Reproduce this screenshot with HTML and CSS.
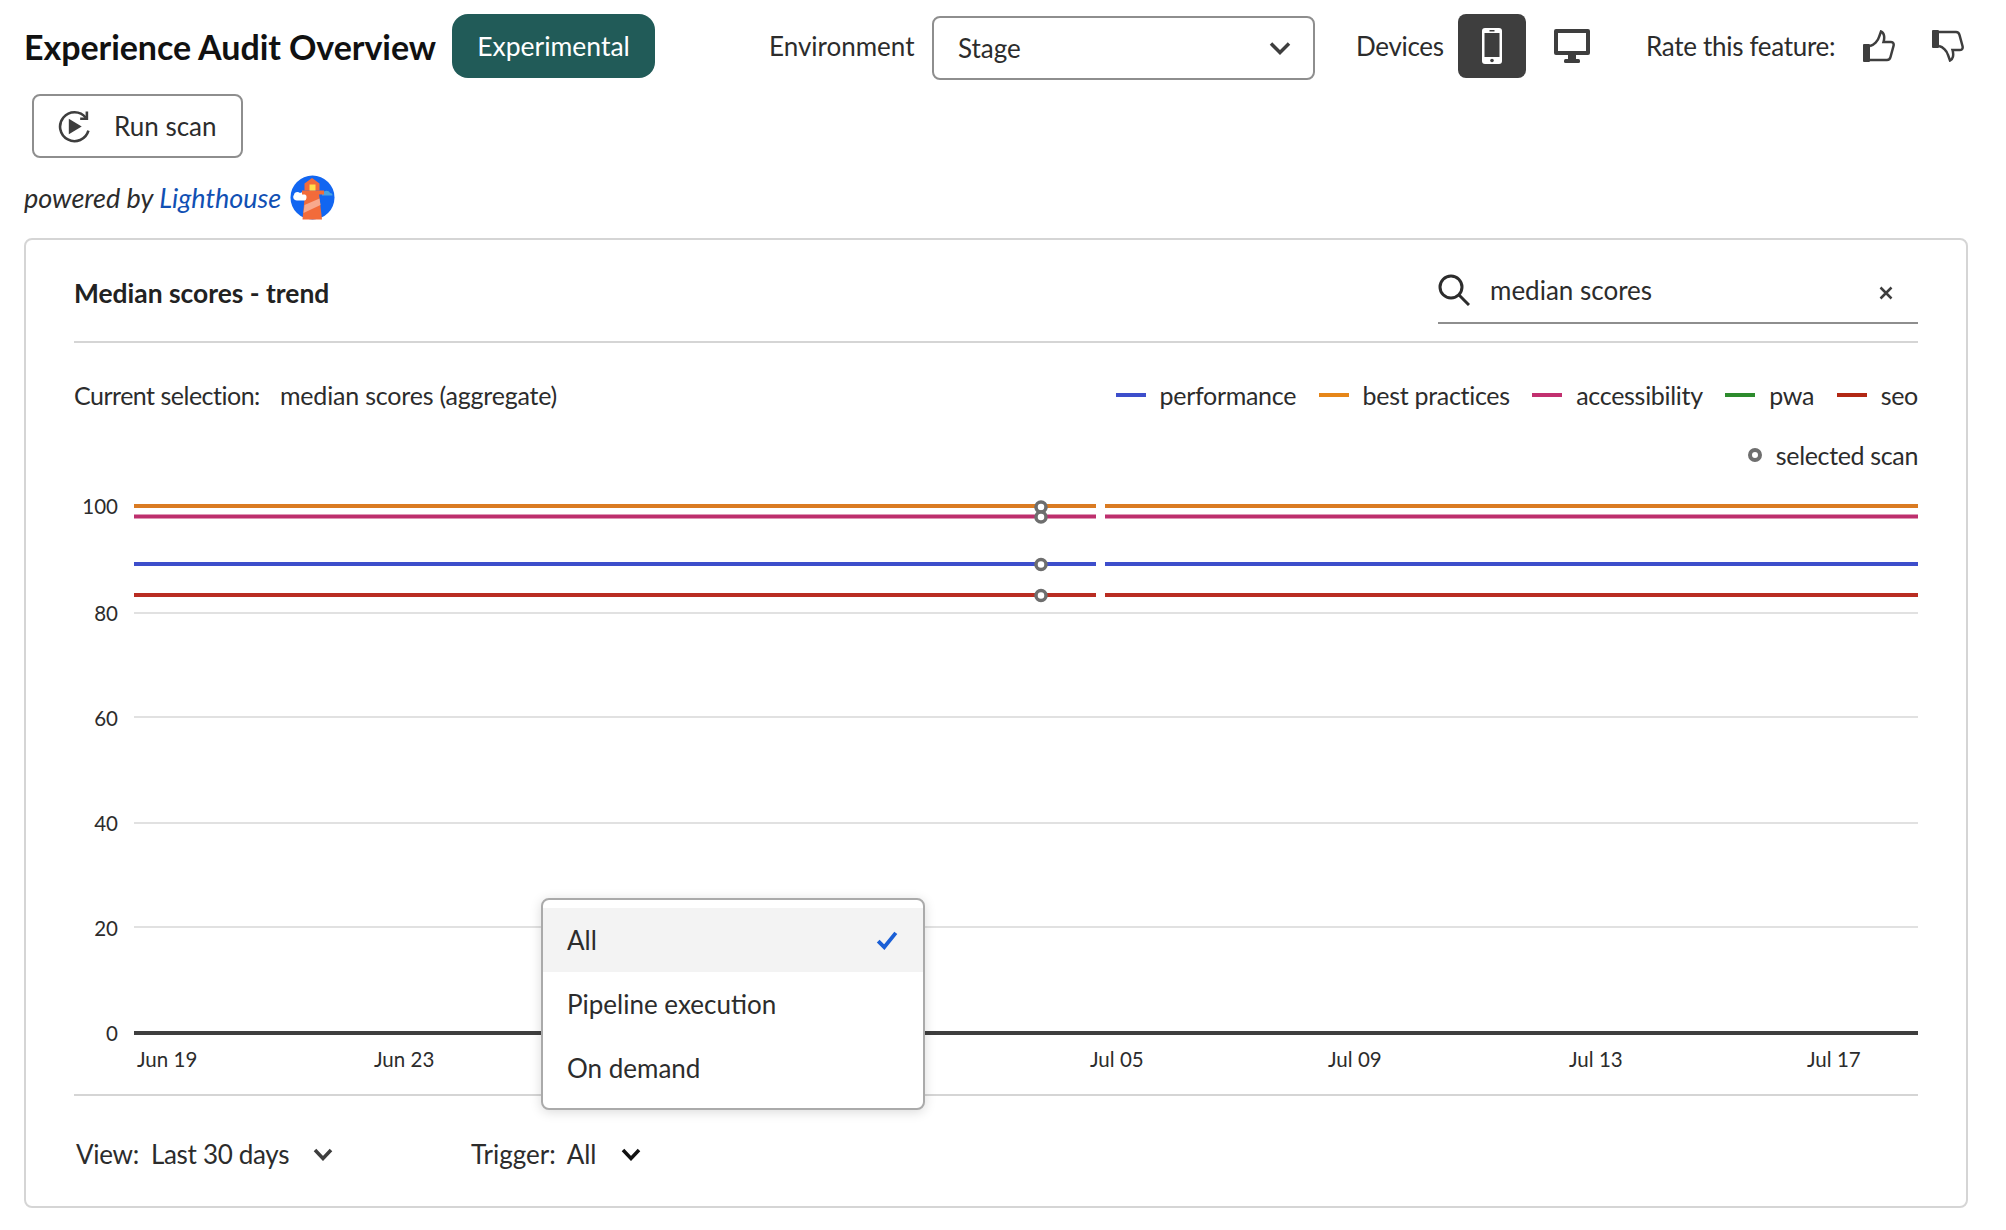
FILE: index.html
```html
<!DOCTYPE html>
<html lang="en">
<head>
    <meta charset="UTF-8">
    <title>Experience Audit Overview</title>
    <link rel="stylesheet" href="styles.css">
</head>
<body>
    <div class="top-bar">
        <h1 class="page-title">Experience Audit Overview</h1>
        <span class="badge">Experimental</span>
        <span class="env-label">Environment</span>
        <div class="select">
            <span>Stage</span>
            <svg class="chevron" width="22" height="14" viewBox="0 0 22 14"><path d="M2 2.500 L11 11.500 L20 2.500" /></svg>
        </div>
        <span class="devices-label">Devices</span>
        <div class="device-btn active">
            <svg width="20" height="36" viewBox="0 0 20 36">
                <rect width="20" height="36" rx="3" fill="#fff" />
                <rect x="2.500" y="5" width="15" height="24" fill="#3e3e3e" />
                <circle cx="10" cy="32.500" r="1.800" fill="#3e3e3e" />
                <rect x="7.500" y="2" width="5" height="1.500" fill="#3e3e3e" />
            </svg>
        </div>
        <div class="device-btn">
            <svg width="36" height="34" viewBox="0 0 36 34">
                <path fill="#3e3e3e" fill-rule="evenodd" d="M2 0 H34 A2 2 0 0 1 36 2 V24 A2 2 0 0 1 34 26 H2 A2 2 0 0 1 0 24 V2 A2 2 0 0 1 2 0 Z M4 4 V22 H32 V4 Z" />
                <rect x="14" y="26" width="8" height="5" fill="#3e3e3e" />
                <rect x="10" y="30" width="16" height="4" rx="1.500" fill="#3e3e3e" />
            </svg>
        </div>
        <span class="rate-label">Rate this feature:</span>
        <svg class="thumb-up" width="32" height="32" viewBox="0 0 32 32">
            <rect x="0" y="14" width="7" height="18" rx="1" fill="#3e3e3e" />
            <path class="thumb-line" d="M7 16 C11 15 15 11 16 7 L18 1.500 C21 2.500 22 7 20.500 12 L28 12 C30.500 12 31 14 30.500 16 L27.500 27 C27 29 26 30 24 30 L7 30" />
        </svg>
        <svg class="thumb-down" width="32" height="32" viewBox="0 0 32 32">
            <rect x="0" y="0" width="7" height="18" rx="1" fill="#3e3e3e" />
            <path class="thumb-line" d="M7 2 L24 2 C26 2 27 3 27.500 5 L30.500 16 C31 18 30.500 20 28 20 L20.500 20 C22 25 21 29.500 18 30.500 L16 25 C15 21 11 17 7 16" />
        </svg>
    </div>

    <button class="run-btn">
        <svg width="33" height="33" viewBox="0 0 32 32">
            <path class="run-ring" d="M29.500 20 A14 14 0 1 1 27 7.500" />
            <path class="run-ring" d="M28 1.500 V8.500 H21.500" />
            <path d="M10.500 8.500 L23 16 L10.500 23.500 Z" fill="#3e3e3e" />
        </svg>
        <span>Run scan</span>
    </button>

    <div class="powered">
        <span>powered by <a class="powered-link">Lighthouse</a></span>
        <svg width="45" height="45" viewBox="0 0 45 45">
            <circle cx="22.500" cy="22.500" r="22" fill="#1266f1" />
            <path d="M33 18 C34 15 39 15 40 18 C42 18 42.500 19 42.500 20.500 H32 C32 19 32 18 33 18 Z" fill="#4aa3df" />
            <path d="M15 19 L29 19 L32 44.500 L12.500 44.500 Z" fill="#f26b3a" />
            <path d="M14.500 30 L29.500 23.500 L30.500 30 L13.500 38 Z" fill="#f8a98d" />
            <path d="M4 20 C4 17 8 16 10 18 C12 16.500 15 17 15.500 20 C17 20 17 25.500 14.500 25.500 H7 C3 25.500 2.500 21 4 20 Z" fill="#fff" />
            <rect x="12" y="15.500" width="22" height="4" fill="#f26b3a" />
            <path d="M14.500 15.500 V8.500 L22 3 L29.500 8.500 V15.500 Z" fill="#f26b3a" />
            <rect x="19.500" y="9.500" width="6" height="6" fill="#ffe04b" />
        </svg>
    </div>

    <section class="card">
        <div class="card-head">
            <h2 class="card-title">Median scores - trend</h2>
            <div class="search">
                <svg width="32" height="32" viewBox="0 0 32 32"><circle cx="13" cy="13" r="11" /><path d="M21 21 L31 31" /></svg>
                <span class="search-text">median scores</span>
                <svg class="search-clear" width="14" height="14" viewBox="0 0 14 14"><path d="M1.500 1.500 L12.500 12.500 M12.500 1.500 L1.500 12.500" /></svg>
            </div>
        </div>

        <div class="legend-row">
            <div class="selection">
                <span class="selection-label">Current selection:</span>
                <span class="selection-value">median scores (aggregate)</span>
            </div>
            <div class="legend">
                <span class="legend-item"><i class="swatch performance"></i>performance</span>
                <span class="legend-item"><i class="swatch practices"></i>best practices</span>
                <span class="legend-item"><i class="swatch accessibility"></i>accessibility</span>
                <span class="legend-item"><i class="swatch pwa"></i>pwa</span>
                <span class="legend-item"><i class="swatch seo"></i>seo</span>
            </div>
        </div>
        <div class="legend-scan"><i class="scan-dot"></i>selected scan</div>

        <svg class="chart" width="1844" height="614" viewBox="0 0 1844 614">
            <g class="grid">
                <line x1="60" x2="1844" y1="133" y2="133" />
                <line x1="60" x2="1844" y1="237" y2="237" />
                <line x1="60" x2="1844" y1="343" y2="343" />
                <line x1="60" x2="1844" y1="447" y2="447" />
            </g>
            <line class="axis" x1="60" x2="1844" y1="553" y2="553" />
            <g class="y-labels">
                <text x="44" y="34">100</text>
                <text x="44" y="141">80</text>
                <text x="44" y="246">60</text>
                <text x="44" y="351">40</text>
                <text x="44" y="456">20</text>
                <text x="44" y="561">0</text>
            </g>
            <path class="trend" stroke="#3d4ecb" d="M60 84 H1022 M1031 84 H1844" />
            <path class="trend" stroke="#bd2f6d" d="M60 36.500 H1022 M1031 36.500 H1844" />
            <path class="trend" stroke="#b92d22" d="M60 115 H1022 M1031 115 H1844" />
            <path class="trend" stroke="#da7b22" d="M60 26 H1022 M1031 26 H1844" />
            <g class="scan-marks">
                <circle cx="967" cy="27" r="5" />
                <circle cx="967" cy="37" r="5" />
                <circle cx="967" cy="84.500" r="5" />
                <circle cx="967" cy="115.500" r="5" />
            </g>
            <g class="x-labels">
                <text x="63" y="587">Jun 19</text>
                <text x="300" y="587">Jun 23</text>
                <text x="1016" y="587">Jul 05</text>
                <text x="1254" y="587">Jul 09</text>
                <text x="1495" y="587">Jul 13</text>
                <text x="1733" y="587">Jul 17</text>
            </g>
        </svg>

        <div class="card-foot">
            <div class="picker view-picker">
                <span class="picker-label">View:</span>
                <span class="picker-value">Last 30 days</span>
                <svg class="chevron" width="20" height="13" viewBox="0 0 20 13"><path d="M2 2 L10 10.500 L18 2" /></svg>
            </div>
            <div class="picker trigger-picker">
                <span class="picker-label">Trigger:</span>
                <span class="picker-value">All</span>
                <svg class="chevron black" width="20" height="13" viewBox="0 0 20 13"><path d="M2 2 L10 10.500 L18 2" /></svg>
            </div>
        </div>

        <ul class="menu">
            <li class="menu-item selected">
                All
                <svg width="22" height="20" viewBox="0 0 20 18"><path d="M2 10 L7.500 15.500 L18 2.500" /></svg>
            </li>
            <li class="menu-item">Pipeline execution</li>
            <li class="menu-item">On demand</li>
        </ul>
    </section>
</body>
</html>
```
FILE: styles.css
```css
* {
    box-sizing: border-box;
}

body {
    margin: 0;
    background: #fff;
    color: #2c2c2c;
    font-family: Lato, "Open Sans", sans-serif;
    font-size: 26px;
}

.top-bar {
    display: flex;
    align-items: center;
    height: 64px;
    margin: 14px 0 0 24px;
}

.page-title {
    margin: 0;
    width: 412px;
    font-size: 34px;
    font-weight: 700;
    letter-spacing: -0.06px;
    color: #111;
    white-space: nowrap;
}

.badge {
    display: flex;
    align-items: center;
    justify-content: center;
    width: 203px;
    height: 64px;
    margin-left: 16px;
    background: #215b58;
    color: #fff;
    font-size: 26.500px;
    border-radius: 16px;
}

.env-label {
    margin-left: 114px;
    width: 147px;
    white-space: nowrap;
}

.select {
    display: flex;
    align-items: center;
    justify-content: space-between;
    width: 383px;
    height: 64px;
    margin: 4px 0 0 16px;
    padding: 0 22px 0 24px;
    border: 2px solid #8e8e8e;
    border-radius: 8px;
}

.chevron path {
    fill: none;
    stroke: #3e3e3e;
    stroke-width: 3.500;
}

.chevron.black path {
    stroke: #111;
}

.devices-label {
    margin-left: 41px;
    width: 88px;
    letter-spacing: -0.3px;
    white-space: nowrap;
}

.device-btn {
    display: flex;
    align-items: center;
    justify-content: center;
    width: 68px;
    height: 64px;
    margin-left: 14px;
    border-radius: 8px;
}

.device-btn.active {
    background: #3e3e3e;
}

.device-btn + .device-btn {
    margin-left: 12px;
}

.rate-label {
    margin-left: 40px;
    width: 189px;
    letter-spacing: -0.3px;
    white-space: nowrap;
}

.thumb-up {
    margin-left: 28px;
}

.thumb-down {
    margin-left: 37px;
}

.thumb-line {
    fill: none;
    stroke: #3e3e3e;
    stroke-width: 2.500;
}

.run-btn {
    display: flex;
    align-items: center;
    width: 211px;
    height: 64px;
    margin: 16px 0 0 32px;
    padding: 0 0 0 24px;
    background: #fff;
    border: 2px solid #8e8e8e;
    border-radius: 8px;
    color: #2c2c2c;
    font: inherit;
}

.run-btn span {
    margin-left: 23px;
}

.run-ring {
    fill: none;
    stroke: #3e3e3e;
    stroke-width: 2.500;
}

.powered {
    display: flex;
    align-items: center;
    height: 45px;
    margin: 17px 0 0 24px;
    font-size: 27px;
    font-style: italic;
}

.powered span {
    width: 266px;
    white-space: nowrap;
}

.powered-link {
    color: #1150b4;
}

.card {
    position: relative;
    width: 1944px;
    height: 970px;
    margin: 18px 0 0 24px;
    padding: 0 48px;
    border: 2px solid #d5d5d5;
    border-radius: 8px;
}

.card-head {
    display: flex;
    justify-content: space-between;
    height: 103px;
    border-bottom: 2px solid #d5d5d5;
}

.card-title {
    margin: 37px 0 0;
    font-size: 26.400px;
    font-weight: 700;
    color: #222;
}

.search {
    display: flex;
    align-items: center;
    width: 480px;
    height: 84px;
    padding-top: 17px;
    border-bottom: 2px solid #8e8e8e;
}

.search svg circle,
.search svg path {
    fill: none;
    stroke: #2c2c2c;
    stroke-width: 3;
}

.search-text {
    margin-left: 20px;
    flex: 1;
}

.search-clear {
    margin-right: 25px;
    margin-top: 6px;
}

.search .search-clear path {
    stroke: #3e3e3e;
    stroke-width: 2.500;
}

.legend-row {
    display: flex;
    justify-content: space-between;
    align-items: center;
    height: 32px;
    margin-top: 36px;
    font-size: 25px;
    letter-spacing: -0.3px;
}

.selection {
    display: flex;
}

.selection-label {
    width: 206px;
    letter-spacing: -0.5px;
}

.selection-value {
    letter-spacing: -0.2px;
}

.legend {
    display: flex;
    gap: 22.500px;
}

.legend-item {
    display: flex;
    align-items: center;
}

.swatch {
    width: 30px;
    height: 4px;
    margin-right: 14px;
}

.swatch.performance {
    background: #3d4ecb;
}

.swatch.practices {
    background: #e68619;
}

.swatch.accessibility {
    background: #c2306f;
}

.swatch.pwa {
    background: #2d8b2d;
}

.swatch.seo {
    background: #b22814;
}

.legend-scan {
    display: flex;
    justify-content: flex-end;
    align-items: center;
    height: 32px;
    margin-top: 28px;
    font-size: 25px;
    letter-spacing: -0.35px;
}

.scan-dot {
    width: 14px;
    height: 14px;
    margin-right: 14px;
    border: 4px solid #6e6e6e;
    border-radius: 50%;
}

.chart {
    display: block;
    margin-top: 9px;
    font-size: 20.500px;
    fill: #2c2c2c;
}

.grid line {
    stroke: #e1e1e1;
    stroke-width: 2;
}

.axis {
    stroke: #3e3e3e;
    stroke-width: 4;
}

.y-labels text {
    text-anchor: end;
}

.trend {
    fill: none;
    stroke-width: 4;
}

.scan-marks circle {
    fill: #fff;
    stroke: #6e6e6e;
    stroke-width: 3.500;
}

.card-foot {
    display: flex;
    align-items: center;
    height: 119px;
    padding-bottom: 1px;
    border-top: 2px solid #d5d5d5;
}

.picker {
    display: flex;
    align-items: center;
}

.view-picker {
    width: 397px;
    padding-left: 2px;
    letter-spacing: -0.3px;
}

.picker-value {
    margin-left: 12px;
}

.trigger-picker .picker-value {
    margin-left: 11px;
}

.picker .chevron {
    margin-left: 24px;
}

.menu {
    position: absolute;
    left: 515px;
    top: 658px;
    width: 384px;
    height: 212px;
    margin: 0;
    padding: 8px 0;
    list-style: none;
    background: #fff;
    border: 2px solid #aaa;
    border-radius: 8px;
    box-shadow: 0 2px 12px rgba(0, 0, 0, 0.15);
}

.menu-item {
    display: flex;
    align-items: center;
    justify-content: space-between;
    height: 64px;
    padding: 0 25px 0 24px;
}

.menu-item.selected {
    background: #f3f3f3;
}

.menu-item svg path {
    fill: none;
    stroke: #1a5fd6;
    stroke-width: 3.500;
}
```
